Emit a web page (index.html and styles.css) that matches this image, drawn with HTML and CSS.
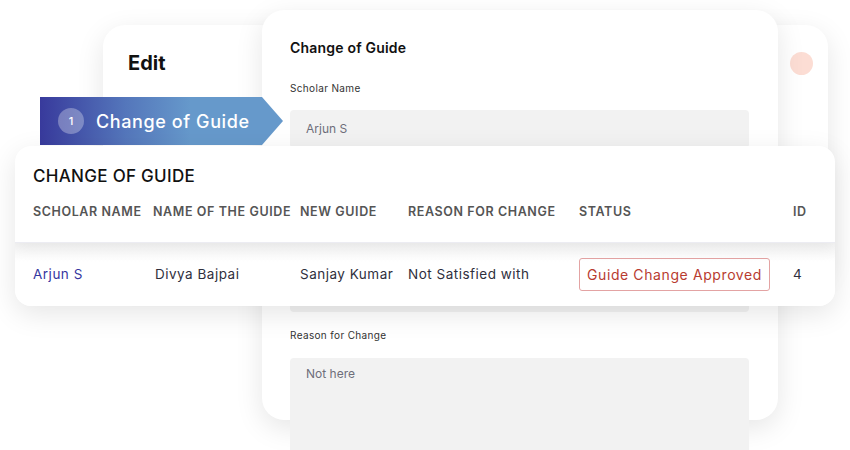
FILE: index.html
```html
<!DOCTYPE html>
<html lang="en">
<head>
    <meta charset="UTF-8">
    <meta name="viewport" content="width=device-width, initial-scale=1.0">
    <title>Change of Guide</title>
    <link rel="stylesheet" href="styles.css">
</head>
<body>

    <div class="stage">

        <!-- back window -->
        <div class="card edit-card">
            <h2>Edit</h2>
            <span class="dot"></span>
        </div>

        <!-- form window -->
        <div class="card form-card">
            <h3>Change of Guide</h3>

            <div class="field">
                <label>Scholar Name</label>
                <div class="input">Arjun S</div>
            </div>
            <!-- these two sit under the table window -->
            <div class="field">
                <label></label>
                <div class="input"></div>
            </div>
            <div class="field">
                <label></label>
                <div class="input"></div>
            </div>
            <div class="field last">
                <label>Reason for Change</label>
                <div class="input textarea">Not here</div>
            </div>
        </div>

        <!-- step ribbon -->
        <div class="ribbon">
            <span class="step">1</span>
            <span>Change of Guide</span>
        </div>

        <!-- table window -->
        <div class="card table-card">
            <div class="table-head">
                <h3>CHANGE OF GUIDE</h3>
                <div class="row cols">
                    <span>SCHOLAR NAME</span>
                    <span>NAME OF THE GUIDE</span>
                    <span>NEW GUIDE</span>
                    <span>REASON FOR CHANGE</span>
                    <span>STATUS</span>
                    <span>ID</span>
                </div>
            </div>
            <div class="row data">
                <span class="name">Arjun S</span>
                <span class="guide">Divya Bajpai</span>
                <span>Sanjay Kumar</span>
                <span>Not Satisfied with</span>
                <span><span class="badge">Guide Change Approved</span></span>
                <span>4</span>
            </div>
        </div>

    </div>

</body>
</html>
```

FILE: styles.css
```css
* {
    box-sizing: border-box;
}
body {
    margin: 0;
    font-family: Inter, "Open Sans", sans-serif;
    background: #fff;
    color: #222;
}
.stage {
    position: relative;
    width: 850px;
    height: 450px;
    overflow: hidden;
}
.card {
    position: absolute;
    background: #fff;
    border-radius: 22px;
    box-shadow: 0 8px 28px rgba(0, 0, 0, 0.10);
}

/* back window */
.edit-card {
    left: 103px;
    top: 25px;
    width: 725px;
    height: 250px;
    padding: 25px;
}
.edit-card h2 {
    margin: 0;
    font-size: 20px;
    font-weight: 700;
    line-height: 26px;
    color: #111;
}
.dot {
    position: absolute;
    top: 27px;
    right: 15px;
    width: 23px;
    height: 23px;
    border-radius: 50%;
    background: #fcddd4;
}

/* form window */
.form-card {
    left: 262px;
    top: 10px;
    width: 516px;
    height: 410px;
    padding: 29px 29px 0 28px;
}
.form-card h3 {
    margin: 0 0 24px;
    font-size: 14px;
    font-weight: 600;
    line-height: 18px;
    letter-spacing: 0.2px;
    color: #111;
}
.field {
    margin-bottom: 15px;
}
.field.last {
    padding-top: 1px;
}
.field label {
    display: block;
    height: 14px;
    font-size: 10px;
    line-height: 14px;
    letter-spacing: 0.35px;
    color: #333;
    margin-bottom: 15px;
}
.field.last label {
    margin-bottom: 16px;
}
.input {
    height: 38px;
    padding: 10px 16px;
    background: #f2f2f2;
    border-radius: 4px;
    font-size: 12px;
    line-height: 18px;
    color: #6e6e7a;
}
.input.textarea {
    height: 120px;
    padding-top: 7px;
}

/* step ribbon */
.ribbon {
    position: absolute;
    left: 40px;
    top: 97px;
    width: 243px;
    height: 48px;
    display: flex;
    align-items: center;
    gap: 12px;
    padding-left: 18px;
    color: #fff;
    font-size: 18px;
    font-weight: 500;
    letter-spacing: 0.6px;
    background: linear-gradient(90deg, #383a9c 0%, #5476bb 35%, #6699cb 62%, #6699cb 100%);
    clip-path: polygon(0 0, 222px 0, 100% 50%, 222px 100%, 0 100%);
}
.step {
    width: 26px;
    height: 26px;
    border-radius: 50%;
    background: rgba(255, 255, 255, 0.3);
    display: flex;
    align-items: center;
    justify-content: center;
    font-size: 11px;
    letter-spacing: 0;
}

/* table window */
.table-card {
    left: 15px;
    top: 146px;
    width: 820px;
    height: 160px;
    border-radius: 16px;
    overflow: hidden;
}
.table-head {
    position: relative;
    padding: 19px 18px 21px;
    border-bottom: 1px solid #ececf2;
    box-shadow: 0 6px 14px rgba(0, 0, 0, 0.06);
}
.table-head h3 {
    margin: 0 0 16px;
    font-size: 17px;
    font-weight: 500;
    line-height: 22px;
    letter-spacing: 0.3px;
    color: #111;
}
.row {
    display: grid;
    grid-template-columns: 120px 147px 108px 171px 214px 1fr;
    align-items: center;
}
.cols {
    font-size: 12.5px;
    font-weight: 600;
    line-height: 18px;
    letter-spacing: 0.6px;
    color: #555;
}
.data {
    padding: 13px 18px 16px;
    font-size: 13.5px;
    letter-spacing: 0.5px;
    color: #2f2f3d;
    background: linear-gradient(#f5f5f5, #fff 30%);
}
.data .name {
    color: #3636a0;
}
.data .guide {
    padding-left: 2px;
}
.badge {
    display: inline-block;
    width: 191px;
    height: 33px;
    margin-top: 2px;
    line-height: 31px;
    font-size: 14px;
    letter-spacing: 0.6px;
    border: 1px solid #e3a3a3;
    border-radius: 3px;
    color: #b83b30;
    text-align: center;
}
```
